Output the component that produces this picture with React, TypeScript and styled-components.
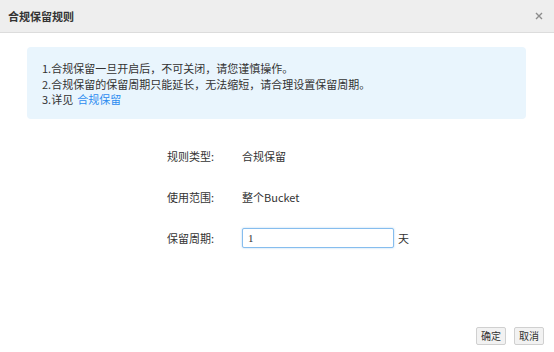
import React, { useState } from 'react';
import styled, { createGlobalStyle } from 'styled-components';

const GlobalStyle = createGlobalStyle`
	html, body {
		margin: 0;
		padding: 0;
		background: #ffffff;
	}
	body {
		font-family: 'Noto Sans CJK SC', 'Liberation Sans', sans-serif;
		color: #333333;
	}
`;

const Dialog = styled.div`
	width: 554px;
	height: 352px;
	display: flex;
	flex-direction: column;
	background: #ffffff;
	box-sizing: border-box;
`;

const Header = styled.div`
	height: 32px;
	flex-shrink: 0;
	display: flex;
	align-items: center;
	justify-content: space-between;
	padding: 0 9px 0 8px;
	background: #eeeeee;
	border-bottom: 1px solid #dcdcdc;
`;

const Title = styled.h1`
	margin: 0;
	font-size: 11px;
	font-weight: 700;
	color: #333333;
`;

const CloseBtn = styled.button`
	border: none;
	background: none;
	padding: 0;
	width: 12px;
	height: 12px;
	display: flex;
	align-items: center;
	justify-content: center;
	cursor: pointer;
`;

const Body = styled.div`
	flex: 1;
	display: flex;
	flex-direction: column;
	padding: 14px 28px 0 27px;
`;

const Notice = styled.div`
	height: 72px;
	box-sizing: border-box;
	padding: 14px 15px 0 15px;
	background: #e9f5fd;
	border-radius: 4px;
	font-size: 11px;
	line-height: 15.5px;
	color: #333333;
`;

const NoticeLine = styled.div`
	white-space: nowrap;
`;

const Link = styled.a`
	color: #2d8cf0;
	text-decoration: none;
	margin-left: 4px;
`;

const Form = styled.div`
	display: grid;
	grid-template-columns: 75px auto;
	grid-auto-rows: 20px;
	row-gap: 21px;
	align-items: center;
	margin: 27px 0 0 140px;
	font-size: 11px;
	color: #333333;
`;

const Label = styled.span`
	white-space: nowrap;
`;

const Value = styled.span`
	display: flex;
	align-items: center;
	gap: 4px;
	white-space: nowrap;
`;

const PeriodInput = styled.input`
	width: 152px;
	height: 20px;
	box-sizing: border-box;
	padding: 0 5px;
	border: 1px solid #86bdee;
	border-radius: 2px;
	box-shadow: 0 0 2px rgba(80, 160, 230, 0.5);
	font-family: 'Liberation Serif', serif;
	font-size: 11px;
	color: #333333;
	outline: none;
`;

const Footer = styled.div`
	display: flex;
	justify-content: flex-end;
	gap: 8px;
	padding: 0 10px 7px 0;
`;

const FooterBtn = styled.button`
	height: 18px;
	padding: 0 4px;
	min-width: 27px;
	border: 1px solid #d0d0d0;
	border-radius: 2px;
	background: #f2f2f2;
	font-family: 'Noto Sans CJK SC', sans-serif;
	font-size: 10px;
	line-height: 16px;
	color: #333333;
	cursor: pointer;
`;

export default function App() {
	const [period, setPeriod] = useState<string>('1');

	return (
		<>
			<GlobalStyle />
			<Dialog>
				<Header>
					<Title>合规保留规则</Title>
					<CloseBtn aria-label='close'>
						<svg width='8' height='8' viewBox='0 0 8 8'>
							<path d='M1 1 L7 7 M7 1 L1 7' stroke='#8c8c8c' strokeWidth='1.4' />
						</svg>
					</CloseBtn>
				</Header>
				<Body>
					<Notice>
						<NoticeLine>1.合规保留一旦开启后，不可关闭，请您谨慎操作。</NoticeLine>
						<NoticeLine>2.合规保留的保留周期只能延长，无法缩短，请合理设置保留周期。</NoticeLine>
						<NoticeLine>
							3.详见<Link href='#'>合规保留</Link>
						</NoticeLine>
					</Notice>
					<Form>
						<Label>规则类型:</Label>
						<Value>合规保留</Value>
						<Label>使用范围:</Label>
						<Value>整个Bucket</Value>
						<Label>保留周期:</Label>
						<Value>
							<PeriodInput value={period} onChange={(e) => setPeriod(e.target.value)} />
							天
						</Value>
					</Form>
				</Body>
				<Footer>
					<FooterBtn>确定</FooterBtn>
					<FooterBtn>取消</FooterBtn>
				</Footer>
			</Dialog>
		</>
	);
}
